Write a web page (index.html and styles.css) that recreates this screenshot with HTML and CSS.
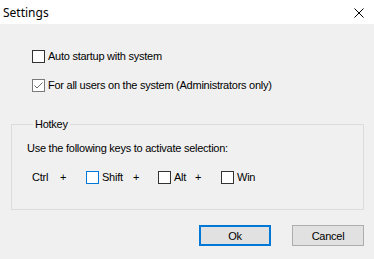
FILE: index.html
```html
<!DOCTYPE html>
<html>
<head>
<meta charset="utf-8">
<link rel="stylesheet" href="styles.css">
</head>
<body>
<div class="window">
  <div class="titlebar">
    <span class="title">Settings</span>
    <svg class="close" width="10" height="10" viewBox="0 0 10 10"><path d="M0.5 0.5 L9.5 9.5 M9.5 0.5 L0.5 9.5" stroke="#000" stroke-width="1" fill="none"/></svg>
  </div>
  <div class="content">
    <div class="options">
      <label class="check-row">
        <span class="box"></span>
        <span class="label">Auto startup with system</span>
      </label>
      <label class="check-row">
        <span class="box box-checked">
          <svg width="11" height="11" viewBox="0 0 11 11"><path d="M1.5 5.5 L4 8 L9.5 2.5" stroke="#6d6d6d" stroke-width="1" fill="none"/></svg>
        </span>
        <span class="label">For all users on the system (Administrators only)</span>
      </label>
    </div>
    <fieldset class="group">
      <legend class="group-title">Hotkey</legend>
      <div class="group-text">Use the following keys to activate selection:</div>
      <div class="keys">
        <span class="key key-ctrl">Ctrl</span>
        <span class="plus">+</span>
        <span class="key key-shift"><span class="box box-focus"></span><span class="label">Shift</span></span>
        <span class="plus plus-b">+</span>
        <span class="key key-alt"><span class="box"></span><span class="label">Alt</span></span>
        <span class="plus">+</span>
        <span class="key"><span class="box"></span><span class="label">Win</span></span>
      </div>
    </fieldset>
    <div class="buttons">
      <button class="btn btn-default">Ok</button>
      <button class="btn">Cancel</button>
    </div>
  </div>
</div>
</body>
</html>
```

FILE: styles.css
```css
html, body {
  margin: 0;
  padding: 0;
}
body {
  width: 374px;
  height: 259px;
  background: #f0f0f0;
  font-family: "Liberation Sans", Arial, sans-serif;
  font-size: 11px;
  line-height: 13px;
  letter-spacing: -0.25px;
  color: #000;
  overflow: hidden;
}
.titlebar {
  height: 24px;
  background: #fff;
  display: flex;
  align-items: center;
  justify-content: space-between;
  padding: 0 10px 0 3px;
}
.title {
  font-family: "Noto Sans", "Open Sans", sans-serif;
  font-size: 12px;
  line-height: 16px;
  letter-spacing: 0;
  margin-top: 1px;
}
.close {
  display: block;
  margin-top: 1px;
}
.content {
  padding: 26px 10px 0 11px;
}
.options {
  padding-left: 21px;
  display: flex;
  flex-direction: column;
  gap: 16px;
}
.check-row {
  display: flex;
  align-items: flex-start;
}
.box {
  width: 11px;
  height: 11px;
  border: 1px solid #333;
  background: #fff;
  flex: none;
  display: block;
}
.box svg {
  display: block;
}
.box-checked {
  border-color: #7a7a7a;
}
.box-focus {
  border-color: #0078d7;
}
.label {
  margin-left: 3px;
}
.group {
  margin: 26px 0 0 0;
  border: 1px solid #dcdcdc;
  padding: 11px 0 25px 15px;
  min-width: 0;
}
.group-title {
  margin-left: 6px;
  padding: 0 2px;
  line-height: 13px;
}
.keys {
  display: flex;
  align-items: flex-start;
  margin-top: 16px;
  padding-left: 5px;
}
.key {
  display: flex;
  align-items: flex-start;
}
.key-ctrl {
  width: 28px;
}
.plus {
  width: 26px;
}
.plus-b {
  width: 25px;
}
.key-shift {
  width: 47px;
}
.key-alt {
  width: 37px;
}
.buttons {
  display: flex;
  justify-content: flex-end;
  gap: 21px;
  margin-top: 15px;
}
.btn {
  width: 72px;
  height: 21px;
  margin: 0;
  padding: 0;
  background: #e1e1e1;
  border: 1px solid #adadad;
  font-family: "Liberation Sans", Arial, sans-serif;
  font-size: 11px;
  letter-spacing: -0.25px;
  color: #000;
}
.btn-default {
  border: 2px solid #0078d7;
}
```
